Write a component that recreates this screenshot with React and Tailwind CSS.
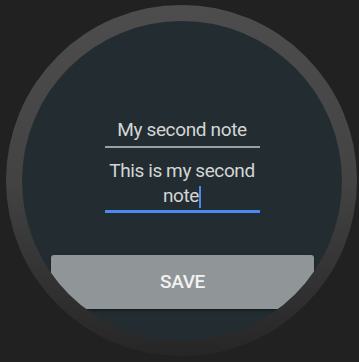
export default function App() {
  const font = { fontFamily: "Roboto, 'Noto Sans', sans-serif" };
  return (
    <div className="w-[359px] h-[362px] bg-[#212121] pl-[6px] pt-[5px] overflow-hidden" style={font}>
      <div className="w-[351px] h-[351px] rounded-full bg-linear-to-b from-[#4d4d4d] via-[#434343] to-[#262626] p-[16px]">
        <div className="w-[320px] h-[320px] rounded-full overflow-hidden bg-[#232d31] flex flex-col items-center pt-[96px]">
          <div className="w-[155px] flex flex-col">
            <div className="text-[19px] leading-[25px] tracking-[-0.35px] text-[#d3d6d6] text-center pb-[4px] border-b-2 border-[#9ca0a1]">
              My second note
            </div>
            <div className="mt-[10px] text-[19px] leading-[25px] tracking-[-0.4px] text-[#d3d6d6] text-center pb-[2px] border-b-[3px] border-[#4a8af0]">
              This is my second note<span className="inline-block w-[2px] h-[22px] bg-[#4a8af0] align-[-6px]"></span>
            </div>
          </div>
          <div className="mt-[42px] self-start ml-[29px] w-[263px] h-[54px] rounded-[3px] bg-[#909597] shadow-[0_2px_3px_rgba(0,0,0,0.35)] flex items-center justify-center">
            <span className="text-[19px] font-medium text-[#f2f2f2] tracking-[-0.3px]">SAVE</span>
          </div>
        </div>
      </div>
    </div>
  );
}
